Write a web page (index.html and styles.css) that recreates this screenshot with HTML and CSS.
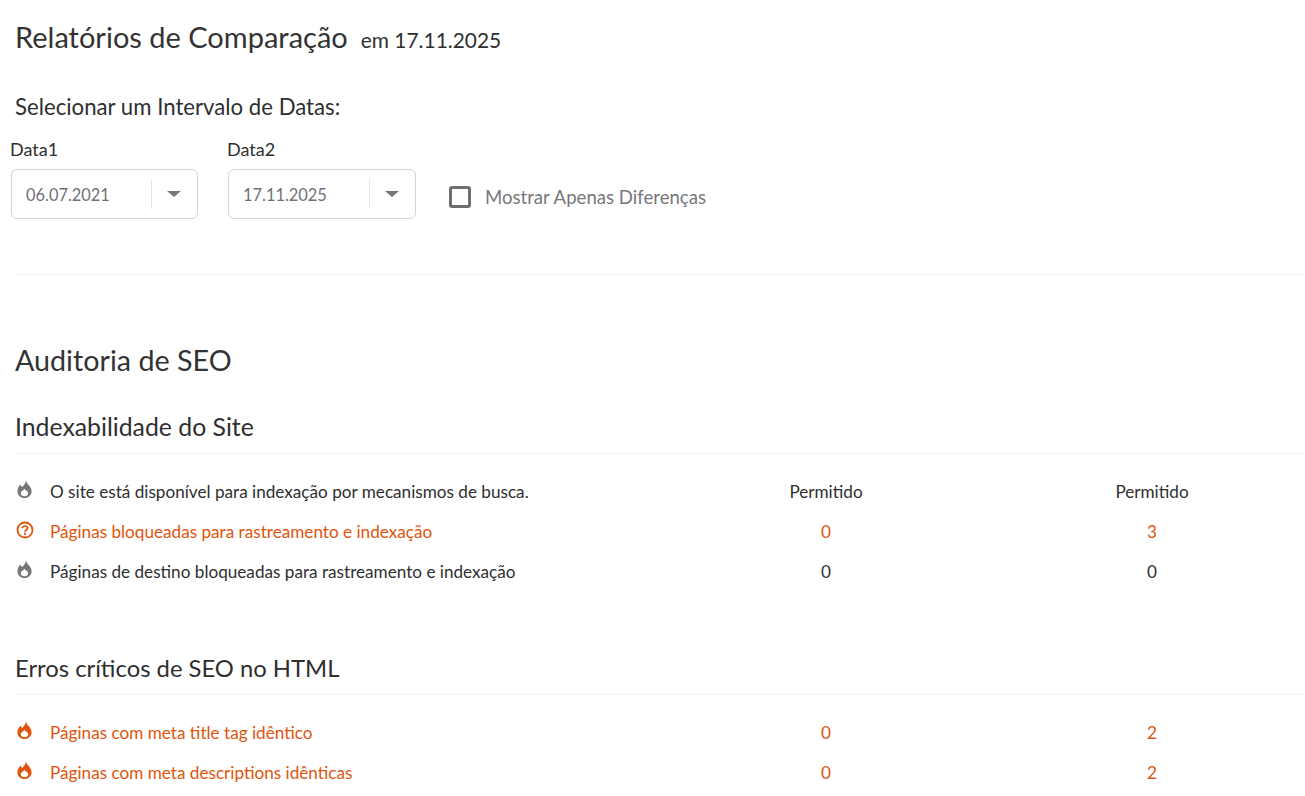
FILE: index.html
```html
<!DOCTYPE html>
<html lang="pt">
<head>
<meta charset="utf-8">
<title>Relatórios de Comparação</title>
<link rel="stylesheet" href="styles.css">
</head>
<body>
<svg class="defs" width="0" height="0" aria-hidden="true">
  <symbol id="flame" viewBox="0 0 14 17">
    <path fill-rule="evenodd" d="M8.5 0C8.8 2.5 10 3.8 11.3 5.3C12.7 6.9 13.7 8.6 13.7 10.6C13.7 14.3 10.8 17 7 17C3.2 17 0.3 14.3 0.3 10.6C0.3 8 1.5 5.8 3.3 4.2C3.5 5.2 3.9 6 4.7 6.6C6.6 5.2 8.2 2.8 8.5 0ZM7 8.3C6.4 9.8 3.5 10.6 3.5 12.4C3.5 14.2 5 15.3 7 15.3C9 15.3 10.5 14.2 10.5 12.4C10.5 10.6 7.3 9.5 7 8.3Z"/>
  </symbol>
  <symbol id="help" viewBox="0 0 18 18">
    <circle cx="9" cy="9" r="7.5" fill="none" stroke="currentColor" stroke-width="1.8"/>
    <path d="M6.4 7.2C6.4 5.8 7.5 5 9 5C10.5 5 11.6 5.9 11.6 7.1C11.6 8.7 9 8.8 9 10.7" fill="none" stroke="currentColor" stroke-width="1.7"/>
    <rect x="8" y="11.8" width="2" height="2"/>
  </symbol>
</svg>
<main class="page">
  <header class="title-row">
    <h1 class="title">Relatórios de Comparação</h1>
    <span class="title-date">em 17.11.2025</span>
  </header>
  <h2 class="range-title">Selecionar um Intervalo de Datas:</h2>
  <form class="filters">
    <div class="field">
      <label class="field-label">Data1</label>
      <div class="select select-a">
        <span class="select-value">06.07.2021</span>
        <span class="select-btn"><span class="caret"></span></span>
      </div>
    </div>
    <div class="field">
      <label class="field-label">Data2</label>
      <div class="select select-b">
        <span class="select-value">17.11.2025</span>
        <span class="select-btn"><span class="caret"></span></span>
      </div>
    </div>
    <label class="check">
      <span class="check-box"></span>
      <span class="check-text">Mostrar Apenas Diferenças</span>
    </label>
  </form>
  <hr class="rule">
  <h2 class="section-title">Auditoria de SEO</h2>

  <h3 class="group-title">Indexabilidade do Site</h3>
  <div class="rows">
    <div class="row">
      <svg class="icon icon-flame"><use href="#flame"/></svg>
      <span class="row-name">O site está disponível para indexação por mecanismos de busca.</span>
      <span class="cell">Permitido</span>
      <span class="cell">Permitido</span>
    </div>
    <div class="row is-warn">
      <svg class="icon icon-help"><use href="#help"/></svg>
      <span class="row-name">Páginas bloqueadas para rastreamento e indexação</span>
      <span class="cell">0</span>
      <span class="cell">3</span>
    </div>
    <div class="row">
      <svg class="icon icon-flame"><use href="#flame"/></svg>
      <span class="row-name">Páginas de destino bloqueadas para rastreamento e indexação</span>
      <span class="cell">0</span>
      <span class="cell">0</span>
    </div>
  </div>

  <h3 class="group-title group-second">Erros críticos de SEO no HTML</h3>
  <div class="rows">
    <div class="row is-warn">
      <svg class="icon icon-flame"><use href="#flame"/></svg>
      <span class="row-name">Páginas com meta title tag idêntico</span>
      <span class="cell">0</span>
      <span class="cell">2</span>
    </div>
    <div class="row is-warn">
      <svg class="icon icon-flame"><use href="#flame"/></svg>
      <span class="row-name">Páginas com meta descriptions idênticas</span>
      <span class="cell">0</span>
      <span class="cell">2</span>
    </div>
  </div>
</main>
</body>
</html>
```

FILE: styles.css
```css
* { box-sizing: border-box; }
html, body { margin: 0; height: 796px; overflow: hidden; background: #fff; }
body { font-family: Lato, sans-serif; color: #2f2f31; }
.defs { position: absolute; }
.page { padding: 0 1px 0 15px; }

.title-row { display: flex; align-items: baseline; padding-top: 18px; height: 60px; }
.title { margin: 0; font-size: 29px; line-height: 38px; font-weight: 400; color: #333335; }
.title-date { margin-left: 13px; font-size: 20.9px; }

.range-title { margin: 30px 0 0; font-size: 22.2px; line-height: 34px; font-weight: 400; height: 34px; }

.filters { display: flex; margin: 12px 0 0 -5px; }
.field { width: 217px; }
.field-label { display: block; font-size: 18px; line-height: 24px; height: 24px; margin-top: 1px; }
.select { display: flex; align-items: center; height: 50px; margin: 8px 0 0 1px; border: 1px solid #d3d3dd; border-radius: 6px; color: #6f7078; font-size: 16.4px; }
.select-a { width: 187px; }
.select-b { width: 188px; }
.select-value { flex: 1; padding-left: 14px; }
.select-btn { display: flex; width: 46px; height: 30px; padding-right: 2px; border-left: 1px solid #e3e3e8; align-items: center; justify-content: center; }
.caret { width: 0; height: 0; border: 7px solid transparent; border-top: 6px solid #77777b; border-bottom: 0; }

.check { display: flex; align-items: center; height: 50px; margin: 36px 0 0 5px; color: #77777b; font-size: 18.6px; }
.check-box { width: 22px; height: 22px; border: 3px solid #6f6f72; border-radius: 3px; margin-right: 14px; }

.rule { margin: 52px 0 0; height: 1px; border: 0; background: #f0f0f2; }

.section-title { margin: 66px 0 0; font-size: 28.7px; line-height: 38px; font-weight: 400; color: #333335; }
.group-title { margin: 31px 0 0; padding-bottom: 9px; height: 44px; font-size: 24.8px; line-height: 34px; font-weight: 400; border-bottom: 1px solid #f0f0f2; }
.group-second { margin-top: 60px; font-size: 23.8px; }

.rows { padding-top: 17px; }
.row { display: grid; grid-template-columns: 35px 613px 326px 326px; align-items: center; height: 40px; font-size: 17.15px; }
.row-name { white-space: nowrap; }
.cell { text-align: center; padding-right: 0; }
.icon { width: 15px; height: 18px; margin: -4px 0 0 2px; fill: #77777b; }
.is-warn { color: #e0540c; }
.is-warn .icon { fill: #e0540c; }
.icon-help { width: 18px; height: 18px; margin: -3px 0 0 1px; color: #e0540c; }
```
